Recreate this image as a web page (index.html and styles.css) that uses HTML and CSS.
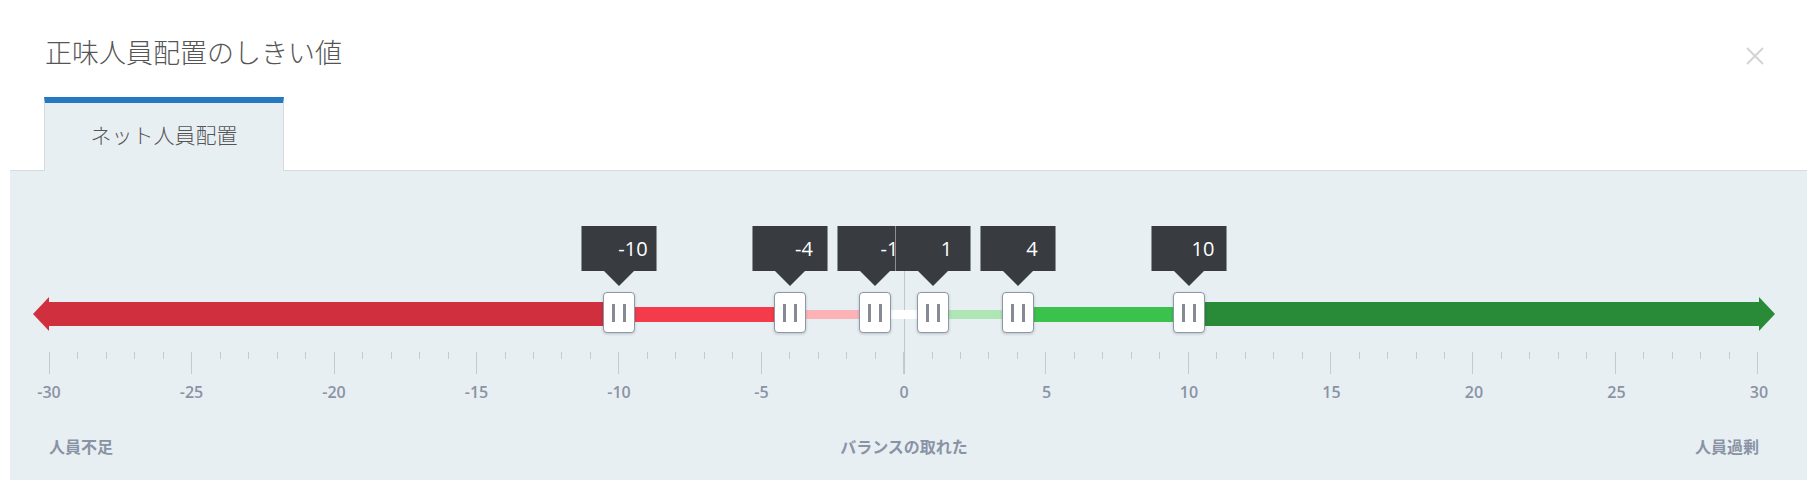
FILE: index.html
```html
<!DOCTYPE html>
<html lang="ja">

<head>
    <meta charset="UTF-8">
    <meta name="viewport" content="width=device-width, initial-scale=1.0">
    <title>正味人員配置のしきい値</title>
    <link rel="stylesheet" href="styles.css">
</head>

<body>
    <div class="dialog">
        <div class="header">
            <h1 class="title">正味人員配置のしきい値</h1>
            <svg class="close" width="18" height="18" viewBox="0 0 18 18">
                <path d="M1 1 L17 17 M17 1 L1 17" />
            </svg>
        </div>

        <div class="tabs">
            <div class="tab active">ネット人員配置</div>
        </div>

        <div class="panel">
            <div class="scale">
                <div class="zero-line"></div>

                <!-- 色帯 -30 ~ 30 -->
                <div class="track">
                    <span class="head head-left"></span>
                    <span class="seg under-far"></span>
                    <span class="seg under-mid"></span>
                    <span class="seg under-near"></span>
                    <span class="seg balanced"></span>
                    <span class="seg over-near"></span>
                    <span class="seg over-mid"></span>
                    <span class="seg over-far"></span>
                    <span class="head head-right"></span>
                </div>

                <!-- つまみ -->
                <div class="thumb" style="left: 33.3333%">
                    <div class="tip">-10</div>
                    <div class="handle"></div>
                </div>
                <div class="thumb" style="left: 43.3333%">
                    <div class="tip">-4</div>
                    <div class="handle"></div>
                </div>
                <div class="thumb" style="left: 48.3333%">
                    <div class="tip">-1</div>
                    <div class="handle"></div>
                </div>
                <div class="thumb" style="left: 51.6667%">
                    <div class="tip">1</div>
                    <div class="handle"></div>
                </div>
                <div class="thumb" style="left: 56.6667%">
                    <div class="tip">4</div>
                    <div class="handle"></div>
                </div>
                <div class="thumb" style="left: 66.6667%">
                    <div class="tip">10</div>
                    <div class="handle"></div>
                </div>

                <!-- 目盛り -->
                <div class="ticks">
                    <span class="major"></span><span></span><span></span><span></span><span></span>
                    <span class="major"></span><span></span><span></span><span></span><span></span>
                    <span class="major"></span><span></span><span></span><span></span><span></span>
                    <span class="major"></span><span></span><span></span><span></span><span></span>
                    <span class="major"></span><span></span><span></span><span></span><span></span>
                    <span class="major"></span><span></span><span></span><span></span><span></span>
                    <span class="major"></span><span></span><span></span><span></span><span></span>
                    <span class="major"></span><span></span><span></span><span></span><span></span>
                    <span class="major"></span><span></span><span></span><span></span><span></span>
                    <span class="major"></span><span></span><span></span><span></span><span></span>
                    <span class="major"></span><span></span><span></span><span></span><span></span>
                    <span class="major"></span><span></span><span></span><span></span><span></span>
                    <span class="major"></span>
                </div>

                <div class="tick-labels">
                    <span>-30</span>
                    <span>-25</span>
                    <span>-20</span>
                    <span>-15</span>
                    <span>-10</span>
                    <span>-5</span>
                    <span>0</span>
                    <span>5</span>
                    <span>10</span>
                    <span>15</span>
                    <span>20</span>
                    <span>25</span>
                    <span>30</span>
                </div>

                <div class="range-labels">
                    <span class="left">人員不足</span>
                    <span class="middle">バランスの取れた</span>
                    <span class="right">人員過剰</span>
                </div>
            </div>
        </div>
    </div>
</body>

</html>
```

FILE: styles.css
```css
* {
    margin: 0;
    padding: 0;
    box-sizing: border-box;
}

body {
    background-color: #fff;
    font-family: "Open Sans", "Noto Sans CJK JP", sans-serif;
}

.header {
    height: 97px;
    display: flex;
    justify-content: space-between;
    align-items: flex-start;
    padding: 36px 55px 0 45px;
}

.title {
    font-family: "Noto Sans CJK JP", sans-serif;
    font-size: 27px;
    line-height: 32px;
    font-weight: 300;
    color: #555;
}

.close {
    margin-top: 11px;
    cursor: pointer;
}

.close path {
    stroke: #d2d2d2;
    stroke-width: 1.8;
    fill: none;
}

.tabs {
    display: flex;
    padding-left: 44px;
}

.tab {
    width: 240px;
    height: 74px;
    padding-top: 17px;
    margin-bottom: -1px;
    position: relative;
    z-index: 1;
    text-align: center;
    font-family: "Noto Sans CJK JP", sans-serif;
    font-size: 21px;
    line-height: 28px;
    font-weight: 300;
    color: #555;
    background-color: #e8eff3;
    border: 1px solid #d6dadd;
    border-bottom: none;
}

.tab.active {
    border-top: 6px solid #2479c1;
}

.panel {
    margin: 0 12px 0 10px;
    padding: 55px 48px 24px 39px;
    background-color: #e8eff3;
    border-top: 1px solid #d6dbde;
}

.scale {
    position: relative;
    padding-top: 71px;
}

.zero-line {
    position: absolute;
    top: 0;
    left: 50%;
    width: 1px;
    height: 148px;
    background-color: #c3c7cb;
}

/* 色帯 */
.track {
    position: relative;
    display: flex;
    align-items: center;
    height: 34px;
    margin: 0 -16px;
}

.head {
    width: 0;
    height: 0;
    border-top: 17px solid transparent;
    border-bottom: 17px solid transparent;
}

.head-left {
    border-right: 16px solid #d0303d;
}

.head-right {
    border-left: 16px solid #298a37;
}

.seg {
    flex-basis: 0;
}

.under-far {
    flex-grow: 20;
    height: 24px;
    background-color: #d0303d;
}

.under-mid {
    flex-grow: 6;
    height: 15px;
    background-color: #f43b4b;
}

.under-near {
    flex-grow: 3;
    height: 9px;
    background-color: #fcb3b8;
}

.balanced {
    flex-grow: 2;
    height: 9px;
    background-color: #fff;
}

.over-near {
    flex-grow: 3;
    height: 9px;
    background-color: #afe6b5;
}

.over-mid {
    flex-grow: 6;
    height: 15px;
    background-color: #3bc24c;
}

.over-far {
    flex-grow: 20;
    height: 24px;
    background-color: #298a37;
}

/* つまみ */
.thumb {
    position: absolute;
    top: 0;
    margin-left: -38px;
    display: flex;
    flex-direction: column;
    align-items: center;
}

.tip {
    position: relative;
    width: 76px;
    height: 45px;
    padding-left: 28px;
    text-align: center;
    white-space: nowrap;
    font-size: 20px;
    line-height: 45px;
    color: #fff;
    background-color: #383b40;
    border-left: 1px solid #8c9095;
    border-right: 1px solid #8c9095;
}

.tip::after {
    content: "";
    position: absolute;
    top: 45px;
    left: 50%;
    margin-left: -15px;
    border-left: 15px solid transparent;
    border-right: 15px solid transparent;
    border-top: 15px solid #383b40;
}

.handle {
    width: 32px;
    height: 41px;
    margin-top: 21px;
    display: flex;
    justify-content: center;
    align-items: center;
    background-color: #fff;
    border: 1px solid #8e97a8;
    border-radius: 4px;
    box-shadow: 0 1px 3px rgba(0, 0, 0, .2);
    cursor: pointer;
}

.handle::before {
    content: "";
    width: 8px;
    height: 18px;
    border-left: 3px solid #868a92;
    border-right: 3px solid #868a92;
}

/* 目盛り */
.ticks {
    display: flex;
    justify-content: space-between;
    align-items: flex-start;
    height: 22px;
    margin-top: 21px;
}

.ticks span {
    width: 1px;
    height: 7px;
    background-color: #c6cace;
}

.ticks span.major {
    height: 22px;
}

.tick-labels {
    display: flex;
    justify-content: space-between;
    margin-top: 8px;
    font-size: 16px;
    line-height: 20px;
    font-weight: 600;
    color: #8a93a5;
}

.tick-labels span {
    width: 0;
    display: flex;
    justify-content: center;
    white-space: nowrap;
}

.range-labels {
    display: grid;
    grid-template-columns: 1fr auto 1fr;
    margin-top: 34px;
    font-family: "Noto Sans CJK JP", sans-serif;
    font-size: 16px;
    line-height: 20px;
    font-weight: 700;
    color: #8a93a5;
}

.range-labels .right {
    text-align: right;
}
```
